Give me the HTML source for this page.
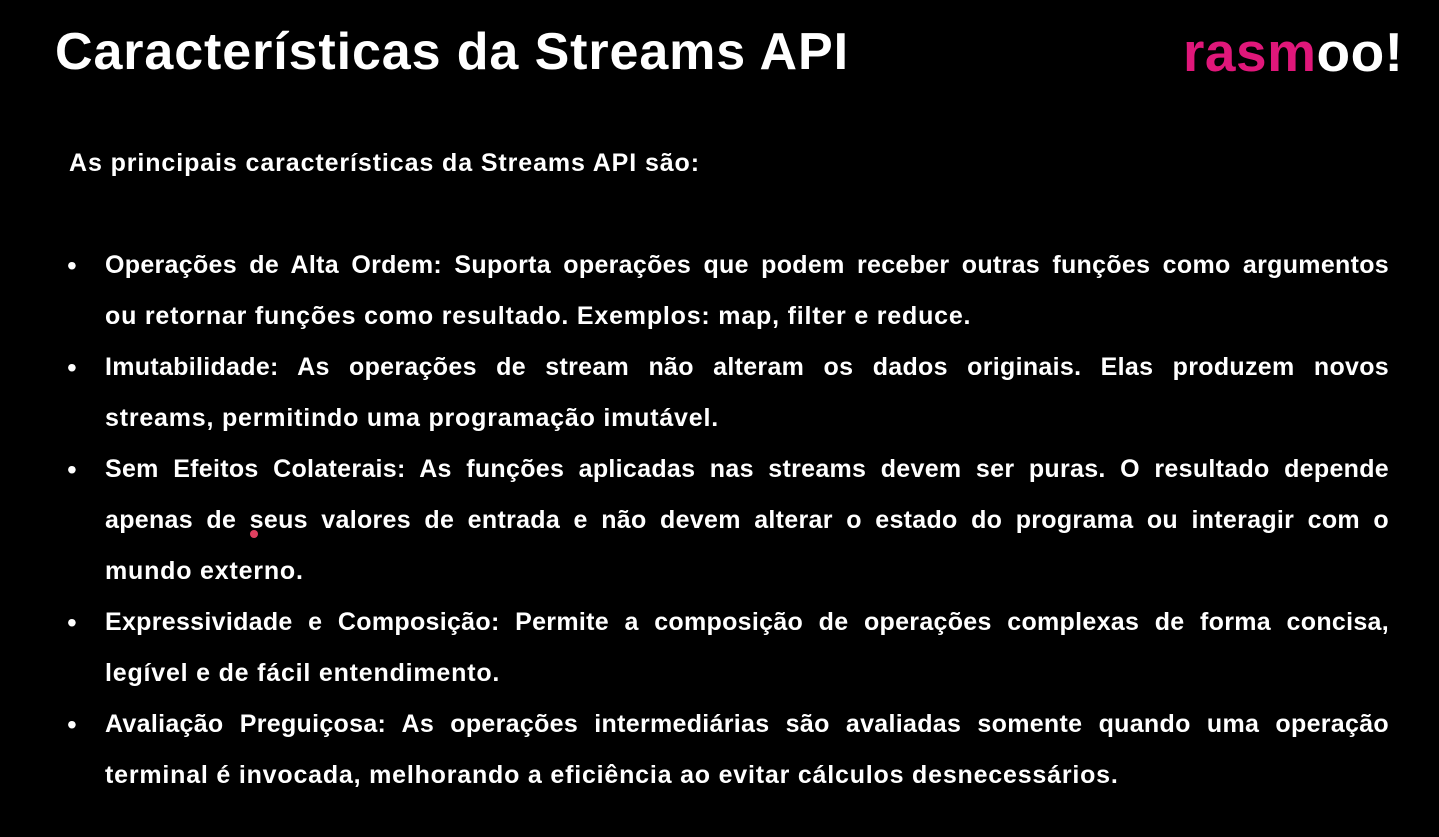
<!DOCTYPE html>
<html><head><meta charset="utf-8"><style>
body{margin:0;width:1439px;height:837px;background:#000;overflow:hidden;font-family:"Liberation Sans",sans-serif;color:#fff;position:relative}
.t{position:absolute;left:55px;top:20px;font-size:52px;font-weight:bold;letter-spacing:0.9px;line-height:64px}
.logo{position:absolute;left:1183px;top:20px;font-size:55px;font-weight:bold;line-height:64px;letter-spacing:0.5px}
.logo .p{color:#e0177a}
.sub{position:absolute;left:69px;top:147px;font-size:25px;font-weight:bold;line-height:32px;letter-spacing:0.9px}
.l{position:absolute;left:105px;width:1284px;font-size:25px;font-weight:bold;line-height:51px;white-space:nowrap;letter-spacing:0.8px}
.j{text-align:justify;text-align-last:justify;white-space:normal;letter-spacing:0.3px}
.b{position:absolute;left:67px;font-size:28px;line-height:51px}
.dot{position:absolute;left:250px;top:530px;width:8px;height:8px;border-radius:50%;background:#e04060}
</style></head><body>
<div class="t">Características da Streams API</div>
<div class="logo"><span class="p">rasm</span>oo!</div>
<div class="sub">As principais características da Streams API são:</div>

<div class="b" style="top:240px">•</div>
<div class="l j" style="top:240px">Operações de Alta Ordem: Suporta operações que podem receber outras funções como argumentos</div>
<div class="l" style="top:291px">ou retornar funções como resultado. Exemplos: map, filter e reduce.</div>

<div class="b" style="top:342px">•</div>
<div class="l j" style="top:342px">Imutabilidade: As operações de stream não alteram os dados originais. Elas produzem novos</div>
<div class="l" style="top:393px">streams, permitindo uma programação imutável.</div>

<div class="b" style="top:444px">•</div>
<div class="l j" style="top:444px">Sem Efeitos Colaterais: As funções aplicadas nas streams devem ser puras. O resultado depende</div>
<div class="l j" style="top:495px">apenas de seus valores de entrada e não devem alterar o estado do programa ou interagir com o</div>
<div class="l" style="top:546px">mundo externo.</div>

<div class="b" style="top:597px">•</div>
<div class="l j" style="top:597px">Expressividade e Composição: Permite a composição de operações complexas de forma concisa,</div>
<div class="l" style="top:648px">legível e de fácil entendimento.</div>

<div class="b" style="top:699px">•</div>
<div class="l j" style="top:699px">Avaliação Preguiçosa: As operações intermediárias são avaliadas somente quando uma operação</div>
<div class="l" style="top:750px">terminal é invocada, melhorando a eficiência ao evitar cálculos desnecessários.</div>
<div class="dot"></div>
</body></html>
